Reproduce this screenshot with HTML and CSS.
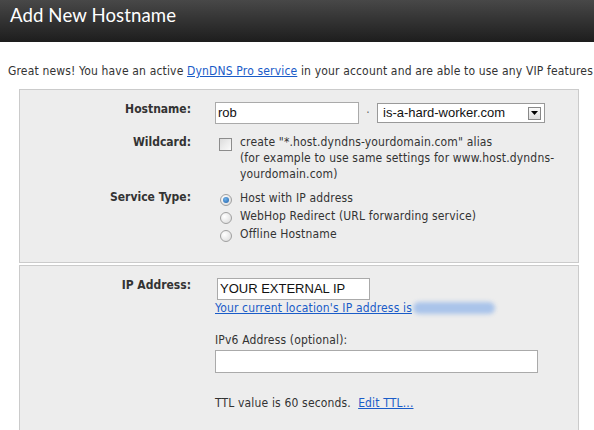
FILE: index.html
```html
<!DOCTYPE html>
<html>
<head>
<meta charset="utf-8">
<link rel="stylesheet" href="styles.css">
</head>
<body>
<header class="titlebar"><h1>Add New Hostname</h1></header>
<p class="intro">Great news! You have an active <a href="#">DynDNS Pro service</a> in your account and are able to use any VIP features</p>

<section class="panel panel-first">
  <div class="row">
    <div class="label">Hostname:</div>
    <div class="field hostline">
      <span class="input host">rob</span>
      <span class="dot">·</span>
      <span class="select"><span class="select-text">is-a-hard-worker.com</span><span class="select-btn"><svg width="7" height="4" viewBox="0 0 7 4"><path d="M0 0H7L3.5 4Z" fill="#000"/></svg></span></span>
    </div>
  </div>
  <div class="row row-wild">
    <div class="label">Wildcard:</div>
    <div class="field checkline">
      <span class="checkbox"></span>
      <span class="checktext">create "*.host.dyndns-yourdomain.com" alias<br>(for example to use same settings for www.host.dyndns-<br>yourdomain.com)</span>
    </div>
  </div>
  <div class="row row-service">
    <div class="label">Service Type:</div>
    <div class="field radios">
      <div class="radioline"><span class="radio on"></span>Host with IP address</div>
      <div class="radioline"><span class="radio"></span>WebHop Redirect (URL forwarding service)</div>
      <div class="radioline"><span class="radio"></span>Offline Hostname</div>
    </div>
  </div>
</section>

<section class="panel panel-second">
  <div class="row">
    <div class="label">IP Address:</div>
    <div class="field ipfield">
      <span class="input ip">YOUR EXTERNAL IP</span>
      <div class="curip"><a href="#">Your current location's IP address is</a><span class="blur"></span></div>
      <div class="v6label">IPv6 Address (optional):</div>
      <span class="input v6"></span>
      <div class="ttl">TTL value is 60 seconds.&nbsp; <a href="#">Edit TTL...</a></div>
    </div>
  </div>
</section>
</body>
</html>
```

FILE: styles.css
```css
html, body { margin: 0; padding: 0; background: #fff; }
body {
  font-family: "DejaVu Sans", Verdana, sans-serif;
  font-stretch: condensed;
  font-size: 12px;
  letter-spacing: 0.16px;
  color: #333;
  width: 594px;
  height: 430px;
  overflow: hidden;
}
a { color: #1a5cc8; text-decoration: underline; }

.titlebar {
  height: 42px;
  background: linear-gradient(#484848, #1d1d1d);
  padding-left: 10px;
  box-sizing: border-box;
}
.titlebar h1 {
  margin: 0;
  font-family: Lato, "Open Sans", sans-serif;
  font-weight: normal;
  font-size: 18.6px;
  line-height: 31px;
  color: #fff;
  letter-spacing: 0.1px;
}

.intro {
  margin: 0;
  padding: 21px 0 0 8px;
  line-height: 16px;
  height: 26px;
  white-space: nowrap;
}

.panel {
  margin-left: 19px;
  width: 560px;
  box-sizing: border-box;
  border: 1px solid #cbcbcb;
  background: #ededed;
}
.panel-first { padding: 11px 0 19px; }
.panel-second { margin-top: 2px; padding: 11px 0 40px; }

.row { display: flex; align-items: flex-start; }
.label {
  width: 171px;
  text-align: right;
  font-weight: bold;
  line-height: 16px;
  color: #333;
  flex: none;
  letter-spacing: 0;
}
.field { margin-left: 24px; line-height: 16px; }

.hostline { display: flex; align-items: center; padding-top: 1px; }
.input {
  display: block;
  box-sizing: border-box;
  background: #fff;
  border: 1px solid #aaa;
  font-family: "Liberation Sans", Arial, sans-serif;
  font-stretch: normal;
  font-size: 13px;
  letter-spacing: 0;
  color: #111;
}
.host { width: 144px; height: 22px; line-height: 20px; padding-left: 2px; }
.dot { width: 18px; text-align: center; color: #666; }
.select {
  display: flex;
  align-items: center;
  width: 168px;
  height: 20px;
  box-sizing: border-box;
  background: #fff;
  border: 1px solid #999;
  font-family: "Liberation Sans", Arial, sans-serif;
  font-stretch: normal;
  font-size: 13px;
  letter-spacing: 0;
  color: #111;
}
.select-text { flex: 1; padding-left: 5px; }
.select-btn {
  width: 13px;
  height: 13px;
  box-sizing: border-box;
  border: 1px solid #888;
  background: linear-gradient(#fafafa, #dcdcdc);
  margin-right: 3px;
  display: flex;
  align-items: center;
  justify-content: center;
}

.row-wild { margin-top: 10px; }
.checkline { display: flex; align-items: flex-start; }
.checkbox {
  flex: none;
  width: 13px;
  height: 13px;
  box-sizing: border-box;
  border: 1px solid #8c8c8c;
  background: linear-gradient(135deg, #dcdcdc, #fbfbfb);
  margin: 4px 8px 0 4px;
}
.checktext { line-height: 16px; }

.row-service { margin-top: 7px; }
.radioline { display: flex; align-items: center; height: 18px; }
.radio {
  flex: none;
  width: 12px;
  height: 12px;
  box-sizing: border-box;
  border: 1px solid #a0a0a0;
  border-radius: 50%;
  background: radial-gradient(circle at 35% 35%, #fff, #d8d8d8);
  margin: 4px 8px 0 5px;
  position: relative;
}
.radio.on::after {
  content: "";
  position: absolute;
  left: 2px; top: 2px;
  width: 6px; height: 6px;
  border-radius: 50%;
  background: radial-gradient(circle at 40% 35%, #6fb2ea, #1f5fa8);
}

.ipfield { padding-top: 1px; margin-left: 26px; }
.ip { width: 153px; height: 22px; line-height: 20px; padding-left: 2px; }
.curip { display: flex; align-items: center; height: 16px; margin-left: -2px; }
.blur {
  display: inline-block;
  width: 82px;
  height: 12px;
  margin-left: 1px;
  border-radius: 6px;
  background: #aac4ea;
  filter: blur(2px);
}
.v6label { margin-top: 16px; margin-left: -2px; line-height: 16px; }
.v6 { width: 323px; height: 23px; margin-left: -2px; margin-top: 2px; }
.ttl { margin-top: 22px; margin-left: -2px; line-height: 16px; }
```
